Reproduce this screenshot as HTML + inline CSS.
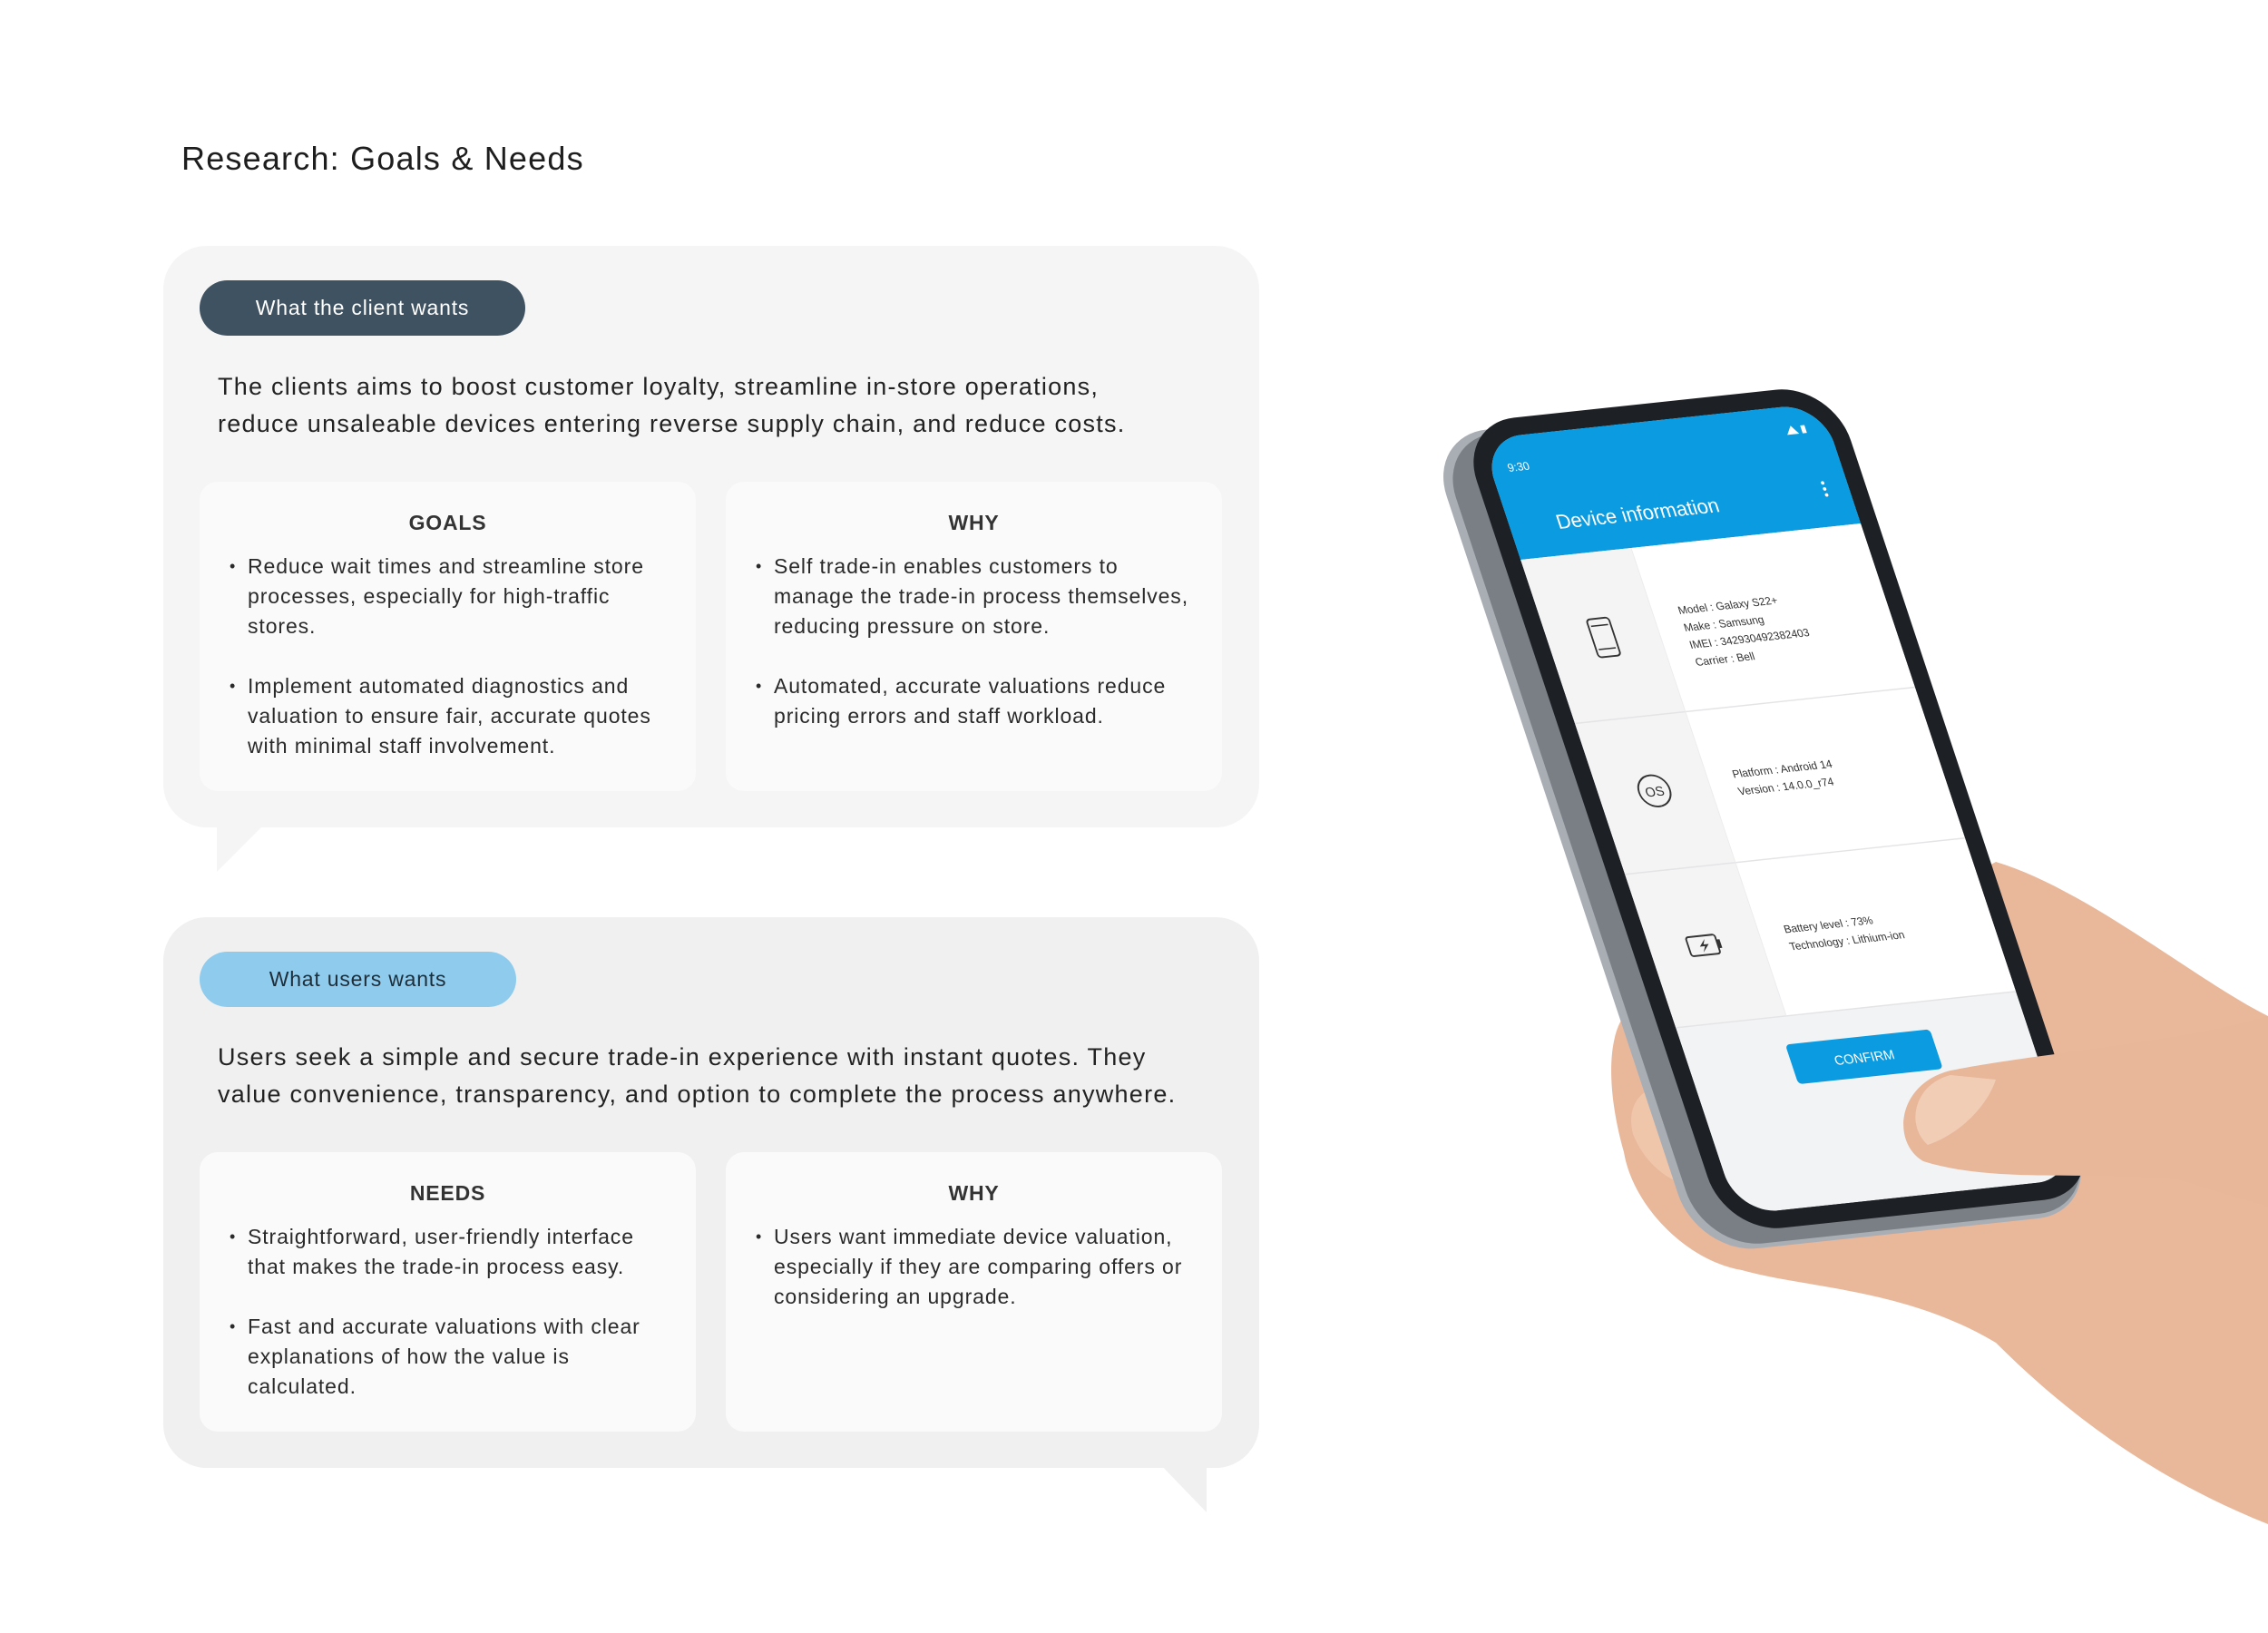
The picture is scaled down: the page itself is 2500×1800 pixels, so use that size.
<!DOCTYPE html>
<html><head><meta charset="utf-8"><style>
*{margin:0;padding:0;box-sizing:border-box}
body{width:2500px;height:1800px;background:#fff;font-family:"Liberation Sans",sans-serif;color:#222;position:relative;overflow:hidden}
.abs{position:absolute}
h1{position:absolute;left:200px;top:154px;font-size:36px;font-weight:normal;color:#1e1e1e;letter-spacing:1.2px}
.card{position:absolute;left:180px;width:1208px;border-radius:48px}
.pill{position:absolute;left:40px;top:38px;height:61px;border-radius:31px;font-size:23px;display:flex;align-items:center;justify-content:center;letter-spacing:0.8px}
.para{position:absolute;left:60px;font-size:27px;line-height:41px;color:#222;letter-spacing:1.25px;white-space:nowrap}
.box{position:absolute;width:547px;background:#fafafa;border-radius:20px}
.box h3{text-align:center;font-size:23px;font-weight:bold;color:#333;margin-top:32px;letter-spacing:0.8px}
.box ul{list-style:none;margin:18px 30px 0 53px}
.box li{position:relative;font-size:23px;line-height:33px;color:#2a2a2a;margin-bottom:33px;letter-spacing:0.9px}
.box li:before{content:"•";position:absolute;left:-20px;font-size:18px}
</style></head><body>
<h1>Research: Goals &amp; Needs</h1>

<svg class="abs" style="left:0;top:0" width="2500" height="1800">
<path d="M239,905 L295,905 L239,961 Z" fill="#f5f5f5"/>
<path d="M1275,1610 L1330,1610 L1330,1667 Z" fill="#f0f0f0"/>
</svg>

<div class="card" style="top:271px;height:641px;background:#f5f5f5">
 <div class="pill" style="width:359px;background:#3f5262;color:#fff">What the client wants</div>
 <div class="para" style="top:135px">The clients aims to boost customer loyalty, streamline in-store operations,<br>reduce unsaleable devices entering reverse supply chain, and reduce costs.</div>
 <div class="box" style="left:40px;top:260px;height:341px">
  <h3>GOALS</h3>
  <ul><li>Reduce wait times and streamline store processes, especially for high-traffic stores.</li>
  <li>Implement automated diagnostics and valuation to ensure fair, accurate quotes with minimal staff involvement.</li></ul>
 </div>
 <div class="box" style="left:620px;top:260px;height:341px">
  <h3>WHY</h3>
  <ul><li>Self trade-in enables customers to manage the trade-in process themselves, reducing pressure on store.</li>
  <li>Automated, accurate valuations reduce pricing errors and staff workload.</li></ul>
 </div>
</div>

<div class="card" style="top:1011px;height:607px;background:#f0f0f0">
 <div class="pill" style="width:349px;background:#8ecbec;color:#1f2d38">What users wants</div>
 <div class="para" style="top:134px">Users seek a simple and secure trade-in experience with instant quotes. They<br>value convenience, transparency, and option to complete the process anywhere.</div>
 <div class="box" style="left:40px;top:259px;height:308px">
  <h3>NEEDS</h3>
  <ul><li>Straightforward, user-friendly interface that makes the trade-in process easy.</li>
  <li>Fast and accurate valuations with clear explanations of how the value is calculated.</li></ul>
 </div>
 <div class="box" style="left:620px;top:259px;height:308px">
  <h3>WHY</h3>
  <ul><li>Users want immediate device valuation, especially if they are comparing offers or considering an upgrade.</li></ul>
 </div>
</div>

<svg class="abs" style="left:0;top:0" width="2500" height="1800" font-family="Liberation Sans, sans-serif">
 <path d="M2200,950 C2300,980 2420,1080 2500,1120 L2500,1680 C2400,1640 2300,1580 2200,1480 C2100,1420 1990,1420 1920,1400 C1860,1390 1800,1330 1790,1270 C1770,1200 1770,1130 1800,1110 C1830,1095 1860,1110 1870,1130 Z" fill="#e9b89b"/>
 <path d="M1800,1250 C1790,1210 1820,1190 1850,1200 L1900,1300 C1870,1320 1820,1300 1800,1250 Z" fill="#f0c6ab"/>
 <g transform="matrix(0.9375,-0.1,0.315,0.95,1632,484)">
  <rect x="-60" y="-10" width="470" height="950" rx="70" fill="#a9aeb5"/>
  <rect x="-50" y="-5" width="460" height="940" rx="68" fill="#7a7f86"/>
  <rect x="-20" y="-20" width="440" height="940" rx="66" fill="#1d2025"/>
  <clipPath id="scr"><rect x="0" y="0" width="400" height="900" rx="48"/></clipPath>
  <g clip-path="url(#scr)">
   <rect width="400" height="900" fill="#f2f3f5"/>
   <rect width="400" height="140" fill="#0a9be0"/>
   <text x="20" y="40" font-size="13" fill="#fff">9:30</text>
   <path d="M350,32 l7,-10 l7,10z M368,32 v-9 h5 v9z" fill="#fff"/>
   <text x="55" y="110" font-size="23" fill="#fff">Device information</text>
   <circle cx="372" cy="90" r="2" fill="#fff"/><circle cx="372" cy="97" r="2" fill="#fff"/><circle cx="372" cy="104" r="2" fill="#fff"/>
   <rect x="130" y="140" width="270" height="543" fill="#fff"/>
   <rect x="0" y="140" width="130" height="543" fill="#f4f4f5"/>
   <path d="M0,330H400M0,505H400M0,683H400" stroke="#e4e4e6" stroke-width="1.5"/>
   <path d="M130,140V683" stroke="#ececee" stroke-width="1"/>
   <g font-size="12.5" fill="#333">
    <text x="160" y="220">Model : Galaxy S22+</text>
    <text x="160" y="240">Make : Samsung</text>
    <text x="160" y="260">IMEI : 342930492382403</text>
    <text x="160" y="280">Carrier : Bell</text>
    <text x="160" y="410">Platform : Android 14</text>
    <text x="160" y="430">Version : 14.0.0_r74</text>
    <text x="160" y="590">Battery level : 73%</text>
    <text x="160" y="610">Technology : Lithium-ion</text>
   </g>
   <rect x="52" y="215" width="26" height="44" rx="4" fill="none" stroke="#333" stroke-width="2"/>
   <path d="M55,223H75M55,250H75" stroke="#333" stroke-width="1.5"/>
   <circle cx="65" cy="415" r="18" fill="none" stroke="#333" stroke-width="2"/>
   <text x="65" y="421" font-size="15" text-anchor="middle" fill="#333">OS</text>
   <rect x="45" y="583" width="34" height="22" rx="3" fill="none" stroke="#333" stroke-width="2"/>
   <rect x="79" y="589" width="4" height="10" fill="#333"/>
   <path d="M66,587 l-8,8 h6 l-4,7 l9,-9 h-6z" fill="#333"/>
   <rect x="118" y="715" width="170" height="46" rx="5" fill="#0a9be0"/>
   <text x="203" y="744" font-size="15" text-anchor="middle" fill="#fff">CONFIRM</text>
  </g>
 </g>
 <path d="M2500,1120 C2400,1150 2250,1160 2150,1180 C2090,1195 2085,1260 2120,1280 C2200,1305 2300,1290 2400,1300 L2500,1330 Z" fill="#e8b699"/>
 <path d="M2150,1185 C2110,1195 2100,1240 2125,1262 C2160,1250 2190,1220 2200,1190 Z" fill="#f2cdb6"/>
</svg>
</body></html>
